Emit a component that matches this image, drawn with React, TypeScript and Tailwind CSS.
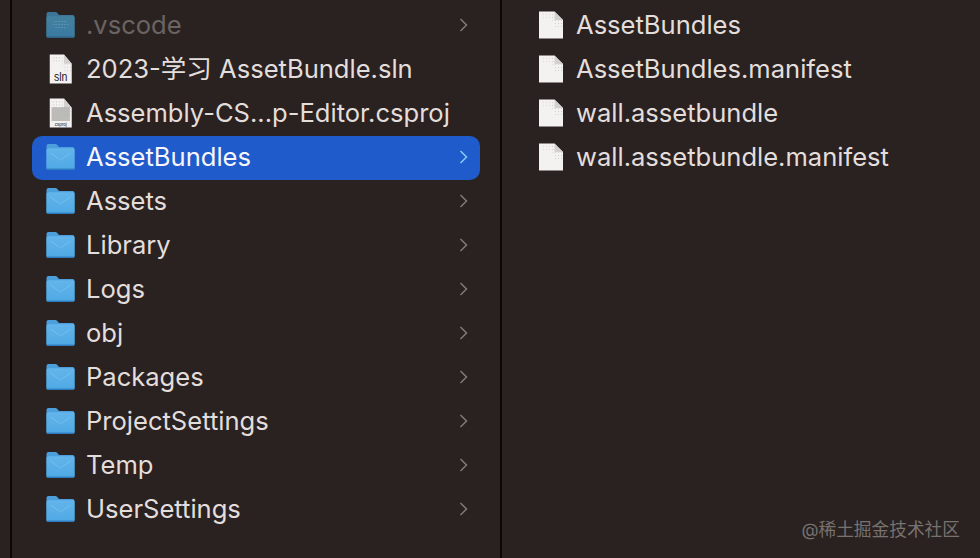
const folders1 = ['Assets', 'Library', 'Logs', 'obj', 'Packages', 'ProjectSettings', 'Temp', 'UserSettings'];
const rightFiles = ['AssetBundles', 'AssetBundles.manifest', 'wall.assetbundle', 'wall.assetbundle.manifest'];

const FolderIcon = ({ id, dark }: { id: string; dark?: boolean }) => (
  <svg width="30" height="28" viewBox="0 0 30 28" className="shrink-0 -translate-x-[0.5px]">
    <defs>
      <linearGradient id={id} x1="0" y1="0" x2="0" y2="1">
        <stop offset="0" stopColor={dark ? '#44809f' : '#63b5ea'} />
        <stop offset="1" stopColor={dark ? '#3a7aa3' : '#4fa8e4'} />
      </linearGradient>
      <pattern id={`${id}-dots`} width="3" height="3" patternUnits="userSpaceOnUse">
        <rect x="1" y="1" width="1" height="1" fill="#8fb6cc" />
      </pattern>
    </defs>
    <path d="M1 3C1 1.800 1.800 1 3 1h6.800c.9 0 1.400.3 2 .9L13.500 4H27c1.200 0 2 .8 2 2v19c0 1.200-.8 2-2 2H3c-1.200 0-2-.8-2-2z" fill={dark ? '#3b7699' : '#4a9fdc'} />
    <path d="M1 7c0-1 .8-1.800 1.800-1.800h24.400c1 0 1.800.8 1.800 1.800v18c0 1.100-.8 2-1.900 2H2.900C1.800 27 1 26.100 1 25z" fill={`url(#${id})`} />
    {dark ? (
      <ellipse cx="15" cy="13" rx="8" ry="5" fill={`url(#${id}-dots)`} opacity="0.7" />
    ) : (
      <path d="M5 10l10 7 10-7" fill="none" stroke="#84c8f2" strokeWidth="1" opacity="0.6" />
    )}
    <path d="M1.500 26.200h27" stroke={dark ? '#2f6283' : '#2f7fc0'} strokeWidth="1.500" />
  </svg>
);

const FileIcon = ({ id, label, lines }: { id: string; label?: string; lines?: boolean }) => (
  <svg
    width={label ? 27.500 : 30}
    height={label ? 32 : 30}
    viewBox="0 0 30 30"
    preserveAspectRatio="none"
    className="shrink-0"
  >
    <defs>
      <pattern id={id} width="3" height="3" patternUnits="userSpaceOnUse">
        <rect x="1" y="1" width="1" height="1" fill="#c4c1bf" />
      </pattern>
    </defs>
    <path d="M3 1.500h15.500L27 10v18.500H3z" fill="#f4f2f1" />
    <path d="M14 3h4.500L27 11v8h-8z" fill={`url(#${id})`} opacity="0.7" />
    <path d="M5 3h9v5H5z" fill={`url(#${id})`} opacity={label ? 1 : 0.5} />
    <path d="M18.500 1.500V10H27z" fill="#d3d1cf" />
    {lines && <rect x="5" y="9.500" width="20" height="13" fill="#aeaca9" opacity="0.8" />}
    {label && (
      <text
        x="15"
        y={lines ? 27 : 26.500}
        textAnchor="middle"
        fontSize={lines ? 5 : 11.500}
        fill="#24201f"
        fontFamily="Liberation Sans, sans-serif"
      >
        {label}
      </text>
    )}
  </svg>
);

const Chevron = ({ selected }: { selected?: boolean }) => (
  <svg width="9" height="14" viewBox="0 0 9 14" className="absolute right-[12px] top-[14px]">
    <path d="M1.500 1l6 6-6 6" fill="none" stroke={selected ? '#86ccf5' : '#7f7a78'} strokeWidth="1.500" />
  </svg>
);

const Row = ({
  icon,
  name,
  muted,
  selected,
  chevron,
}: {
  icon: React.ReactNode;
  name: string;
  muted?: boolean;
  selected?: boolean;
  chevron?: boolean;
}) => (
  <div
    className={`relative flex h-[44px] items-center gap-[11px] pb-[2px] pl-[14px] text-[25.550px] leading-none ${
      selected ? 'rounded-[10px] bg-[#1f5bcb] text-[#f6f6fb]' : muted ? 'text-[#6a6462]' : 'text-[#e3dedc]'
    }`}
  >
    <span className="flex w-[29px] justify-center">{icon}</span>
    <span className="whitespace-pre">{name}</span>
    {chevron && <Chevron selected={selected} />}
  </div>
);

export default function App() {
  return (
    <div
      className="relative flex h-[558px] w-[980px] overflow-hidden bg-[#2a2220]"
      style={{ fontFamily: '"Inter", "Noto Sans CJK SC", sans-serif' }}
    >
      <div className="w-[10px] shrink-0" />
      <div className="w-[2px] shrink-0 bg-[#0a0706]" />
      <div className="flex w-[488px] shrink-0 flex-col pl-[20px] pr-[20px] pt-[4px]">
        <Row icon={<FolderIcon id="f0" dark />} name=".vscode" muted chevron />
        <Row icon={<FileIcon id="d1" label="sln" />} name="2023-学习 AssetBundle.sln" />
        <Row icon={<FileIcon id="d2" label="csproj" lines />} name="Assembly-CS...p-Editor.csproj" />
        <Row icon={<FolderIcon id="f1" />} name="AssetBundles" selected chevron />
        {folders1.map((name, i) => (
          <Row key={name} icon={<FolderIcon id={`g${i}`} />} name={name} chevron />
        ))}
      </div>
      <div className="w-[2px] shrink-0 bg-[#0a0706]" />
      <div className="flex flex-1 flex-col pl-[20px] pt-[4px]">
        {rightFiles.map((name, i) => (
          <Row key={name} icon={<FileIcon id={`r${i}`} />} name={name} />
        ))}
      </div>
      <span className="absolute right-[20px] top-[521px] text-[17.700px] leading-none text-[#77716f]">@稀土掘金技术社区</span>
    </div>
  );
}
